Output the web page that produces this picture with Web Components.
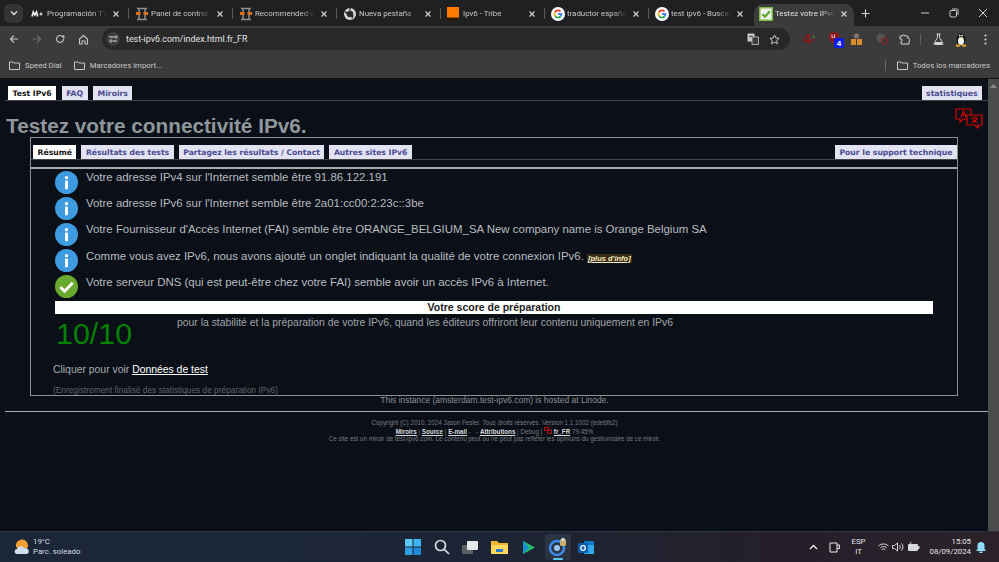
<!DOCTYPE html>
<html lang="fr">
<head>
<meta charset="utf-8">
<title>Testez votre IPv6</title>
<style>
  html, body { margin: 0; height: 100%; overflow: hidden; background: #0b0f17; }
  body { width: 999px; height: 562px; display: flex; flex-direction: column; font-family: "Liberation Sans", Arial, sans-serif; }
  a { color: inherit; }
</style>
</head>
<body>
<browser-frame></browser-frame>
<test-page>
  <site-tab slot="top" active>Test IPv6</site-tab>
  <site-tab slot="top">FAQ</site-tab>
  <site-tab slot="top">Miroirs</site-tab>
  <site-tab slot="top" push>statistiques</site-tab>

  <site-tab slot="inner" active>Résumé</site-tab>
  <site-tab slot="inner">Résultats des tests</site-tab>
  <site-tab slot="inner">Partagez les résultats / Contact</site-tab>
  <site-tab slot="inner">Autres sites IPv6</site-tab>
  <site-tab slot="inner" push>Pour le support technique</site-tab>

  <status-row>Votre adresse IPv4 sur l'Internet semble être 91.86.122.191</status-row>
  <status-row>Votre adresse IPv6 sur l'Internet semble être 2a01:cc00:2:23c::3be</status-row>
  <status-row>Votre Fournisseur d'Accès Internet (FAI) semble être ORANGE_BELGIUM_SA New company name is Orange Belgium SA</status-row>
  <status-row>Comme vous avez IPv6, nous avons ajouté un onglet indiquant la qualité de votre connexion IPv6. <more-info>[plus d'info]</more-info></status-row>
  <status-row kind="ok">Votre serveur DNS (qui est peut-être chez votre FAI) semble avoir un accès IPv6 à Internet.</status-row>
</test-page>
<task-bar></task-bar>

<script>
const tabIcons = {
  movistar: `<svg width="12" height="12" viewBox="0 0 12 12"><path d="M1 8.500 2.300 4l1.600 3L5.500 4l1.300 4.500" fill="none" stroke="#eee" stroke-width="1.700"/><path d="M8.500 6h3M10 4.500v3" stroke="#eee" stroke-width="1.200"/></svg>`,
  panel: `<svg width="14" height="14" viewBox="0 0 14 14"><path d="M2 1.500h10M2 12.500h10M4 2v10M10 2v10" stroke="#8d8d8d" stroke-width="1.500" fill="none"/><rect x="1" y="5" width="4.500" height="3" fill="#d9701c"/><rect x="8.500" y="5" width="4.500" height="3" fill="#d9701c"/></svg>`,
  chrome: `<svg width="14" height="14" viewBox="0 0 14 14"><circle cx="7" cy="7" r="6" fill="#d8d8d8"/><circle cx="7" cy="7" r="3.300" fill="#2b2b2b"/><path d="M7 1v2.800M2 4.500 4.500 7M9 11.500 10 8" stroke="#2b2b2b" stroke-width="1.200"/></svg>`,
  orange: `<svg width="12" height="14" viewBox="0 0 12 14"><rect width="12" height="14" fill="#ff7900"/><rect y="10.500" width="12" height="3.500" fill="#2a1a0a"/></svg>`,
  google: `<svg width="14" height="14" viewBox="0 0 14 14"><circle cx="7" cy="7" r="7" fill="#fff"/><g fill="none" stroke-width="1.800"><path d="M3.900 5.300A3.500 3.500 0 0 1 9.500 4.500" stroke="#ea4335"/><path d="M3.900 8.700A3.500 3.500 0 0 1 3.900 5.300" stroke="#fbbc05"/><path d="M3.900 8.700A3.500 3.500 0 0 0 9.500 9.500" stroke="#34a853"/><path d="M9.500 9.500A3.500 3.500 0 0 0 10.500 7H7" stroke="#4285f4"/></g></svg>`,
  check: `<svg width="14" height="14" viewBox="0 0 14 14"><rect width="14" height="14" fill="#7fbb3a"/><rect x="1.500" y="1.500" width="11" height="11" fill="#f1f1f1"/><path d="M3.500 7.200 6 9.700 10.800 4.300" fill="none" stroke="#58a52a" stroke-width="2.200"/></svg>`
};

class BrowserTab extends HTMLElement {
  constructor() {
    super();
    this.attachShadow({ mode: "open" });
    const icon = tabIcons[this.getAttribute("icon")] || "";
    this.shadowRoot.innerHTML = `
      <style>
        :host { display: flex; align-items: center; box-sizing: border-box; width: 104px; padding: 0 8px 3px 7px; position: relative; color: #c7c7c7; font: 7.900px Roboto, "Open Sans", sans-serif; }
        :host([active]) { background: #3b3b3b; background-clip: padding-box; border: 0 solid transparent; border-width: 0 2px; border-radius: 10px 10px 0 0; color: #e3e3e3; padding: 0 6px 3px 5px; }
        :host([divider])::before { content: ""; position: absolute; left: 0; top: 4px; height: 11px; width: 1px; background: #5a5a5a; }
        .ico { width: 14px; height: 14px; display: flex; align-items: center; justify-content: flex-start; flex: none; }
        .t { margin-left: 2px; flex: 1; white-space: nowrap; overflow: hidden; -webkit-mask-image: linear-gradient(90deg, #000 75%, transparent 98%); mask-image: linear-gradient(90deg, #000 75%, transparent 98%); }
        svg.x { flex: none; margin-left: 4px; }
      </style>
      <span class="ico">${icon}</span>
      <span class="t"><slot></slot></span>
      <svg class="x" width="8" height="8" viewBox="0 0 8 8"><path d="M1.500 1.500l5 5M6.500 1.500l-5 5" stroke="#d5d5d5" stroke-width="1.100"/></svg>`;
  }
}
customElements.define("browser-tab", BrowserTab);

class BrowserFrame extends HTMLElement {
  constructor() {
    super();
    this.attachShadow({ mode: "open" });
    this.shadowRoot.innerHTML = `
      <style>
        :host { display: block; flex: none; height: 79px; background: #1f2021; color: #c7c7c7; font: 7.800px Roboto, "Open Sans", sans-serif; }
        .tabs { height: 26px; display: flex; align-items: center; padding-left: 4px; }
        .switch { width: 19px; height: 19px; border-radius: 6px; background: #333435; display: flex; align-items: center; justify-content: center; margin-right: 1px; flex: none; }
        .tab-list { display: flex; align-self: flex-end; height: 22px; }
        .plus { margin-left: 5px; flex: none; }
        .win { margin-left: auto; display: flex; gap: 19px; padding-right: 11px; align-items: center; }
        .tool { height: 26px; background: #3b3b3b; display: flex; align-items: center; padding: 0 8px 0 9px; }
        .nav { display: flex; gap: 13px; align-items: center; margin-right: 13px; }
        .nav svg { flex: none; }
        .omni { width: 688px; box-sizing: border-box; height: 22px; border-radius: 11px; background: #282828; display: flex; align-items: center; padding: 0 10px 0 4px; flex: none; }
        .tune { width: 14px; height: 14px; border-radius: 7px; background: #3e3e3e; display: flex; align-items: center; justify-content: center; margin-right: 6px; }
        .url { color: #e3e3e3; font-size: 8.900px; flex: 1; }
        .omni-end { display: flex; gap: 10px; align-items: center; }
        .ext { display: flex; align-items: center; }
        .ext > * { flex: none; }
        .bm { background: #3b3b3b; display: flex; align-items: center; padding: 0 9px; gap: 12px; border-bottom: 1px solid #111; box-sizing: border-box; height: 27px; }
        .bm span { display: flex; align-items: center; gap: 5px; white-space: nowrap; }
        .bm .right { margin-left: auto; }
        .sep { width: 1px; height: 11px; background: #6a6a6a; margin-right: 6px; }
      </style>
      <div class="tabs">
        <div class="switch"><svg width="8" height="6" viewBox="0 0 8 6"><path d="M1 1.500l3 3 3-3" fill="none" stroke="#e3e3e3" stroke-width="1.400"/></svg></div>
        <div class="tab-list">
          <browser-tab icon="movistar">Programación TV</browser-tab>
          <browser-tab icon="panel" divider>Panel de control</browser-tab>
          <browser-tab icon="panel" divider>Recommended videos</browser-tab>
          <browser-tab icon="chrome" divider>Nueva pestaña</browser-tab>
          <browser-tab icon="orange" divider>Ipv6 - Tribe</browser-tab>
          <browser-tab icon="google" divider>traductor español</browser-tab>
          <browser-tab icon="google" divider>test ipv6 - Buscar</browser-tab>
          <browser-tab icon="check" active>Testez votre IPv6</browser-tab>
        </div>
        <svg class="plus" width="9" height="9" viewBox="0 0 9 9"><path d="M4.500 .5v8M.5 4.500h8" stroke="#d5d5d5" stroke-width="1.100"/></svg>
        <div class="win">
          <svg width="10" height="10" viewBox="0 0 10 10"><path d="M1 5h8" stroke="#c7c7c7"/></svg>
          <svg width="10" height="10" viewBox="0 0 10 10"><rect x="1" y="2.500" width="6.500" height="6.500" rx="1" fill="none" stroke="#c7c7c7"/><path d="M3 1h5.500a.5.5 0 0 1 .5.5V7" fill="none" stroke="#c7c7c7"/></svg>
          <svg width="10" height="10" viewBox="0 0 10 10"><path d="M1 1l8 8M9 1l-8 8" stroke="#d5d5d5"/></svg>
        </div>
      </div>
      <div class="tool">
        <div class="nav">
          <svg width="10" height="10" viewBox="0 0 10 10"><path d="M9 5H1.500M5 1.500 1.500 5 5 8.500" fill="none" stroke="#c7c7c7" stroke-width="1.100"/></svg>
          <svg width="10" height="10" viewBox="0 0 10 10"><path d="M1 5h7.500M5 1.500 8.500 5 5 8.500" fill="none" stroke="#6f6f6f" stroke-width="1.100"/></svg>
          <svg width="10" height="10" viewBox="0 0 10 10"><path d="M8.500 5a3.500 3.500 0 1 1-1-2.500L8.800 3.800V1" fill="none" stroke="#c7c7c7" stroke-width="1.100"/></svg>
          <svg width="11" height="11" viewBox="0 0 11 11"><path d="M1.500 5 5.500 1.500 9.500 5v5H7V7H4v3H1.500z" fill="none" stroke="#c7c7c7" stroke-width="1.100"/></svg>
        </div>
        <div class="omni">
          <div class="tune"><svg width="9" height="8" viewBox="0 0 9 8"><path d="M0 2h5M8 6H4" stroke="#ddd"/><circle cx="7" cy="2" r="1.200" fill="none" stroke="#ddd" stroke-width=".8"/><circle cx="2" cy="6" r="1.200" fill="none" stroke="#ddd" stroke-width=".8"/></svg></div>
          <span class="url">test-ipv6.com/index.html.fr_FR</span>
          <div class="omni-end">
            <svg width="12" height="12" viewBox="0 0 12 12"><rect x=".5" y=".5" width="7" height="8" fill="#c7c7c7"/><rect x="5" y="4" width="6.500" height="7.500" fill="#3a3a3a" stroke="#c7c7c7" stroke-width=".8"/><path d="M2 3.500h4M4 2.500v1" stroke="#333" stroke-width=".8"/></svg>
            <svg width="11" height="11" viewBox="0 0 11 11"><path d="M5.500 1 6.900 4l3.200.4-2.400 2.200.7 3.200-2.900-1.600-2.900 1.600.7-3.200L.9 4.400 4.100 4z" fill="none" stroke="#d5d5d5" stroke-width=".9"/></svg>
          </div>
        </div>
        <div class="ext">
          <svg style="margin-left:13px" width="13" height="14" viewBox="0 0 13 14"><text x="0" y="12" font-family="Liberation Sans" font-weight="700" font-size="14" fill="#8b1414">4</text><rect x="9.500" y="3.500" width="2.200" height="2.200" fill="#3e7a2e"/><rect x="9.500" y="7" width="2.200" height="2.200" fill="#7a2222"/></svg>
          <svg style="margin-left:12px" width="16" height="17" viewBox="0 0 16 17"><path d="M1 2.500 6 1l5 1.500v4c0 3-2 5-5 6-3-1-5-3-5-6z" fill="#8a1a1f"/><path d="M4 3.500v3h1.500M6.500 3.500v3.500" stroke="#e6d5d5" stroke-width=".9" fill="none"/><rect x="6" y="7" width="10" height="10" rx="1.500" fill="#0b1de8"/><text x="11" y="15" text-anchor="middle" font-family="Liberation Sans" font-weight="700" font-size="8" fill="#fff">4</text></svg>
          <svg style="margin-left:6px" width="13" height="12" viewBox="0 0 13 12"><circle cx="6.500" cy="3" r="2.500" fill="#8a8078"/><rect x="3" y="2.500" width="7" height="1" fill="#6b6560"/><rect x="1" y="6" width="5" height="6" fill="#d98b2b"/><rect x="7" y="6" width="5" height="6" fill="#d98b2b"/></svg>
          <svg style="margin-left:13px" width="14" height="13" viewBox="0 0 14 13"><circle cx="5" cy="5" r="4.500" fill="#555"/><circle cx="8.500" cy="8" r="3.200" fill="#3b3b3b" stroke="#a01c28" stroke-width="1"/></svg>
          <svg style="margin-left:8px" width="12" height="12" viewBox="0 0 12 12"><path d="M2 3h2.500a1.200 1.200 0 0 1 2.400 0H10v2.500a1.200 1.200 0 0 1 1 2.400V11H3V8.500a1.200 1.200 0 0 0 0-2.400H2z" fill="none" stroke="#d5d5d5" stroke-width="1"/></svg>
          <div style="width:1px;height:11px;background:#5e5e5e;margin-left:10px"></div>
          <svg style="margin-left:12px" width="11" height="12" viewBox="0 0 11 12"><path d="M3.500 1h4M4.500 1v3.500L1 10.500a.6.6 0 0 0 .5 1h8a.6.6 0 0 0 .5-1L6.500 4.500V1" fill="none" stroke="#d5d5d5" stroke-width="1"/><path d="M2.500 9h6l.8 2H1.700z" fill="#d5d5d5"/></svg>
          <svg style="margin-left:11px" width="12" height="15" viewBox="0 0 12 15"><ellipse cx="6" cy="7.500" rx="4.500" ry="6" fill="#111"/><ellipse cx="6" cy="9" rx="3" ry="4" fill="#f2f2f2"/><circle cx="4.800" cy="3.600" r=".9" fill="#fff"/><circle cx="7.200" cy="3.600" r=".9" fill="#fff"/><path d="M4.800 5h2.400L6 6.300z" fill="#e8a81c"/><ellipse cx="3" cy="13.600" rx="2.500" ry="1.200" fill="#e8a81c"/><ellipse cx="9" cy="13.600" rx="2.500" ry="1.200" fill="#e8a81c"/></svg>
          <svg style="margin-left:17px" width="3" height="11" viewBox="0 0 3 11"><circle cx="1.500" cy="1.500" r="1.100" fill="#d5d5d5"/><circle cx="1.500" cy="5.500" r="1.100" fill="#d5d5d5"/><circle cx="1.500" cy="9.500" r="1.100" fill="#d5d5d5"/></svg>
        </div>
      </div>
      <div class="bm">
        <span><svg width="11" height="9" viewBox="0 0 11 9"><path d="M.5 1h3.500l1 1h5.500v6.500H.5z" fill="none" stroke="#c7c7c7"/></svg>Speed Dial</span>
        <span><svg width="11" height="9" viewBox="0 0 11 9"><path d="M.5 1h3.500l1 1h5.500v6.500H.5z" fill="none" stroke="#c7c7c7"/></svg>Marcadores import...</span>
        <span class="right"><i class="sep"></i><svg width="11" height="9" viewBox="0 0 11 9"><path d="M.5 1h3.500l1 1h5.500v6.500H.5z" fill="none" stroke="#c7c7c7"/></svg>Todos los marcadores</span>
      </div>`;
  }
}
customElements.define("browser-frame", BrowserFrame);

class SiteTab extends HTMLElement {
  constructor() {
    super();
    this.attachShadow({ mode: "open" });
    this.shadowRoot.innerHTML = `
      <style>
        :host { display: block; flex: none; box-sizing: border-box; height: 14px; padding: 0 4.500px; background: #e2e2f2; color: #4a4a90; font: bold 7.700px/var(--tab-line, 15px) "DejaVu Sans", Verdana, sans-serif; white-space: nowrap; }
        :host([active]) { background: #fff; color: #111; }
        :host([push]) { margin-left: auto; }
      </style>
      <slot></slot>`;
  }
}
customElements.define("site-tab", SiteTab);

class MoreInfo extends HTMLElement {
  constructor() {
    super();
    this.attachShadow({ mode: "open" });
    this.shadowRoot.innerHTML = `
      <style>
        :host { display: inline-block; background: #3a2c10; color: #f5ecc8; font: italic bold 7.500px "Liberation Sans", Arial, sans-serif; text-decoration: underline; padding: 0 1px; vertical-align: -1px; }
      </style>
      <slot></slot>`;
  }
}
customElements.define("more-info", MoreInfo);

class StatusRow extends HTMLElement {
  constructor() {
    super();
    this.attachShadow({ mode: "open" });
    const ok = this.getAttribute("kind") === "ok";
    const glyph = ok
      ? `<circle cx="12" cy="12" r="12" fill="#6aa92f"/><path d="M5.500 12.500 10 17 18.500 8" fill="none" stroke="#fff" stroke-width="3"/>`
      : `<circle cx="12" cy="12" r="12" fill="#3f9be0"/><circle cx="12" cy="7" r="1.700" fill="#fff"/><rect x="10.500" y="10" width="3" height="9" rx=".5" fill="#fff"/>`;
    this.shadowRoot.innerHTML = `
      <style>
        :host { display: flex; align-items: flex-start; height: 26.200px; padding-left: 24px; color: #b9bcc0; font: 11.450px/14px "Liberation Sans", Arial, sans-serif; }
        svg { flex: none; margin-top: 1.500px; }
        .t { margin-left: 8px; margin-top: 1px; white-space: nowrap; }
      </style>
      <svg width="23" height="23" viewBox="0 0 24 24">${glyph}</svg>
      <span class="t"><slot></slot></span>`;
  }
}
customElements.define("status-row", StatusRow);

class TestPage extends HTMLElement {
  constructor() {
    super();
    this.attachShadow({ mode: "open" });
    this.shadowRoot.innerHTML = `
      <style>
        :host { display: flex; flex: 1; min-height: 0; background: #0b0f17; color: #a0a4a8; font-family: "Liberation Sans", Arial, sans-serif; }
        .main { flex: 1; min-width: 0; padding: 7px 0 0 5px; }
        .bar { width: 11px; flex: none; background: #4b4b4b; display: flex; justify-content: center; padding-top: 5px; box-sizing: border-box; }
        .top-tabs { display: flex; gap: 5.500px; padding: 0 6px 0 3px; height: 14px; border-bottom: 1px solid #45474d; }
        .head { display: flex; justify-content: space-between; height: 36px; }
        h1 { margin: 12px 0 0 1px; font: bold 20.750px/26px "Liberation Sans", Arial, sans-serif; color: #8f979c; }
        .lang { margin: 7px 4px 0 0; flex: none; }
        .box { margin: 0 30px 0 25px; height: 259px; box-sizing: border-box; border: 1px solid #8b8f92; }
        .inner-tabs { --tab-line: 16px; display: flex; gap: 5px; padding: 7px 0 0 2px; height: 14px; border-bottom: 1px solid #45474d; box-sizing: content-box; }
        .rule { height: 2px; margin-top: 7px; background: #a9abab; }
        .score-title { margin: 1px 24px 0 24px; height: 13px; background: #fff; color: #222; text-align: center; font: bold 10.500px/13px "Liberation Sans", Arial, sans-serif; }
        .score { display: flex; height: 49px; padding-left: 25px; }
        .num { width: 121px; flex: none; color: #058205; font: 30.400px/36px "Liberation Sans", Arial, sans-serif; margin-top: 1px; }
        .desc { font: 10.400px/14px "Liberation Sans", Arial, sans-serif; color: #a0a4a8; margin-top: 2px; }
        .more { padding-left: 22px; font: 10.400px/14px "Liberation Sans", Arial, sans-serif; color: #a8acb0; }
        .more a { color: #fff; text-decoration: underline; }
        .final { padding: 7px 0 0 22px; font: 8.330px/13px "Liberation Sans", Arial, sans-serif; color: #5f6368; }
        .inst { text-align: center; font: 8.460px/9px "Liberation Sans", Arial, sans-serif; color: #8c9094; padding-right: 4px; }
        .foot-rule { height: 1px; margin: 6px 0 0; background: #a9abab; }
        .foot { text-align: center; font: 6.270px/7.500px "Liberation Sans", Arial, sans-serif; color: #777b80; padding: 7px 4px 0 0; }
        .foot a { color: #d8dadc; font-weight: bold; text-decoration: underline; }
      </style>
      <div class="main">
        <div class="top-tabs"><slot name="top"></slot></div>
        <div class="head">
          <h1>Testez votre connectivité IPv6.</h1>
          <svg class="lang" width="29" height="22" viewBox="0 0 29 22">
            <path d="M1 1h15v10H8l-3 3v-3H1z" fill="#0b0f17" stroke="#d80606" stroke-width="1.200"/>
            <path d="M12 7h15v10h-4v3l-3-3h-8z" fill="#0b0f17" stroke="#d80606" stroke-width="1.200"/>
            <path d="M6 9l2.500-6L11 9M7 7h3" fill="none" stroke="#d80606" stroke-width="1.200"/>
            <path d="M16 10h7M19.500 8.500v2M17 15l5-4M18 11.500l4 3.500" fill="none" stroke="#d80606" stroke-width="1.100"/>
          </svg>
        </div>
        <div class="box">
          <div class="inner-tabs"><slot name="inner"></slot></div>
          <div class="rule"></div>
          <div><slot></slot></div>
          <div class="score-title">Votre score de préparation</div>
          <div class="score">
            <div class="num">10/10</div>
            <div class="desc">pour la stabilité et la préparation de votre IPv6, quand les éditeurs offriront leur contenu uniquement en IPv6</div>
          </div>
          <div class="more">Cliquer pour voir <a href="#">Données de test</a></div>
          <div class="final">(Enregistrement finalisé des statistiques de préparation IPv6)</div>
        </div>
        <div class="inst">This instance (amsterdam.test-ipv6.com) is hosted at Linode.</div>
        <div class="foot-rule"></div>
        <div class="foot">
          Copyright (C) 2010, 2024 Jason Fesler. Tous droits réservés. Version 1.1.1002 (ede6fb2)<br>
          <a href="#">Miroirs</a> | <a href="#">Source</a> | <a href="#">E-mail</a> - &nbsp; - <a href="#">Attributions</a> | Debug | <svg width="8" height="7" viewBox="0 0 8 7"><path d="M.5.5h4v3h-4zM3.500 3h4v3.500h-4z" fill="none" stroke="#c01010"/></svg> <a href="#">fr_FR</a> 79.45%<br>
          Ce site est un miroir de test-ipv6.com. Le contenu peut ou ne peut pas refléter les opinions du gestionnaire de ce miroir.
        </div>
      </div>
      <div class="bar"><svg width="7" height="4" viewBox="0 0 7 4"><path d="M3.500 0 7 4H0z" fill="#8a8a8a"/></svg></div>`;
  }
}
customElements.define("test-page", TestPage);

class TaskBar extends HTMLElement {
  constructor() {
    super();
    this.attachShadow({ mode: "open" });
    this.shadowRoot.innerHTML = `
      <style>
        :host { display: grid; grid-template-columns: 1fr auto 1fr; align-items: center; flex: none; height: 31px; box-sizing: border-box; border-top: 1px solid #2c3442; background: linear-gradient(90deg, #1b2739 0%, #1b2536 45%, #251f2a 80%, #2b2229 100%); color: #e6e8ea; font: 7.800px/10px Roboto, "Open Sans", sans-serif; }
        .weather { display: flex; align-items: center; gap: 3px; padding-left: 14px; }
        .weather div { color: #d8dce0; }
        .apps { display: flex; align-items: center; gap: 9px; height: 100%; }
        .app { width: 20px; height: 26px; display: flex; align-items: center; justify-content: center; position: relative; border-radius: 3px; }
        .app.on { background: #2c3444; width: 26px; margin: 0 -3px; }
        .app.on::after { content: ""; position: absolute; bottom: 0; left: 8px; width: 10px; height: 2px; border-radius: 1px; background: #5cc4f0; }
        .tray { display: flex; align-items: center; justify-content: flex-end; padding-right: 13px; }
        .lang { text-align: center; margin: 0 12px 0 11px; }
        .clock { text-align: right; margin: 0 5px 0 10px; }
      </style>
      <div class="weather">
        <svg width="16" height="16" viewBox="0 0 16 16"><path d="M2 11V7a6 6 0 0 1 12-1v2H2z" fill="#f0a030"/><circle cx="8" cy="7" r="5.500" fill="#f0a030"/><path d="M3 15a2.500 2.500 0 0 1 .3-5 3.500 3.500 0 0 1 6.700-.5A2.800 2.800 0 0 1 13 15z" fill="#cfe0f2"/></svg>
        <div>19°C<br>Parc. soleado</div>
      </div>
      <div class="apps">
        <div class="app"><svg width="16" height="16" viewBox="0 0 16 16"><rect width="7.500" height="7.500" fill="#5cc8f5"/><rect x="8.500" width="7.500" height="7.500" fill="#3fb4ef"/><rect y="8.500" width="7.500" height="7.500" fill="#2f9fe3"/><rect x="8.500" y="8.500" width="7.500" height="7.500" fill="#1f8bd6"/></svg></div>
        <div class="app"><svg width="16" height="16" viewBox="0 0 16 16"><circle cx="6.500" cy="6.500" r="5" fill="none" stroke="#d8dce0" stroke-width="1.700"/><path d="M10.300 10.300 15 15" stroke="#d8dce0" stroke-width="1.700"/></svg></div>
        <div class="app"><svg width="17" height="15" viewBox="0 0 17 15"><rect x="0" y="5" width="11" height="9" rx="1" fill="#5b5f66"/><rect x="5" y="1" width="11" height="9" rx="1" fill="#e4e6e8"/></svg></div>
        <div class="app"><svg width="17" height="15" viewBox="0 0 17 15"><path d="M0 1h6l2 2h9v11H0z" fill="#f2b632"/><rect y="5" width="17" height="9" fill="#fbd75c"/><rect x="5" y="9" width="7" height="3" fill="#2b7bc8"/></svg></div>
        <div class="app"><svg width="13" height="13" viewBox="0 0 13 13"><path d="M1 0 13 6.500 1 13z" fill="#22c06b"/><path d="M1 0 7 6.500 1 13z" fill="#1a8fd0"/></svg></div>
        <div class="app on"><svg width="20" height="20" viewBox="0 0 20 20"><circle cx="9" cy="11" r="7" fill="none" stroke="#3b8be8" stroke-width="2.500"/><circle cx="9" cy="11" r="3" fill="#9cc8f5"/><rect x="12" y="2" width="6" height="7" rx="1.500" fill="#c9b070"/><circle cx="15" cy="2.500" r="1.800" fill="#d5d5d5"/></svg></div>
        <div class="app"><svg width="17" height="15" viewBox="0 0 17 15"><path d="M6 1h10v13H6z" fill="#2fa8e8"/><path d="M6 1h10v4H6z" fill="#0f78c8"/><rect x="0" y="3" width="10" height="10" rx="1.500" fill="#0b5cab"/><circle cx="5" cy="8" r="2.300" fill="none" stroke="#fff" stroke-width="1.300"/></svg></div>
      </div>
      <div class="tray">
        <svg width="9" height="6" viewBox="0 0 9 6"><path d="M1 5l3.500-3.500L8 5" fill="none" stroke="#eee" stroke-width="1.300"/></svg>
        <svg style="margin-left:11px" width="12" height="11" viewBox="0 0 12 11"><path d="M1 1h7v9H1zM8 3h2.500v3.500H8" fill="none" stroke="#e6e8ea"/></svg>
        <div class="lang">ESP<br>IT</div>
        <svg width="11" height="9" viewBox="0 0 11 9"><path d="M.5 3a7 7 0 0 1 10 0M2.200 5a4.500 4.500 0 0 1 6.600 0M3.800 6.800a2.200 2.200 0 0 1 3.400 0" fill="none" stroke="#e6e8ea" stroke-width=".9"/></svg>
        <svg style="margin-left:3px" width="12" height="10" viewBox="0 0 12 10"><path d="M.5 3.500h2L5.500 1v8l-3-2.500h-2z" fill="none" stroke="#e6e8ea" stroke-width=".9"/><path d="M7.500 3a3 3 0 0 1 0 4M9.500 1.500a5 5 0 0 1 0 7" fill="none" stroke="#e6e8ea" stroke-width=".9"/></svg>
        <svg style="margin-left:3px" width="13" height="10" viewBox="0 0 13 10"><rect x="1" y="2" width="10" height="7" rx="1" fill="#d5d8dc"/><rect x="11" y="4" width="1.500" height="3" fill="#d5d8dc"/><path d="M3 2 4.500 0" stroke="#d5d8dc"/></svg>
        <div class="clock">15:05<br>08/09/2024</div>
        <svg width="10" height="11" viewBox="0 0 10 11"><path d="M5 0a3.500 3.500 0 0 1 3.500 3.500V7L10 9H0l1.500-2V3.500A3.500 3.500 0 0 1 5 0z" fill="#8fdcf8"/><rect x="3.500" y="9.500" width="3" height="1.500" fill="#8fdcf8"/></svg>
      </div>`;
  }
}
customElements.define("task-bar", TaskBar);
</script>
</body>
</html>
